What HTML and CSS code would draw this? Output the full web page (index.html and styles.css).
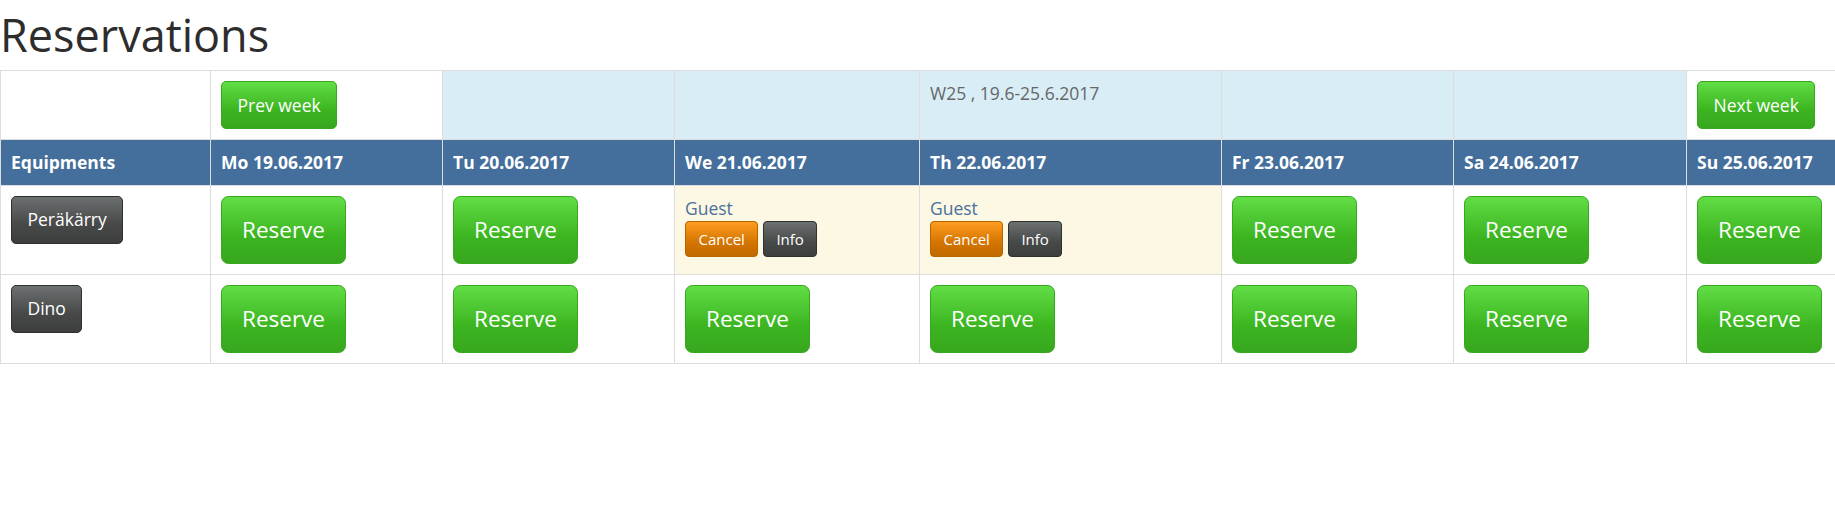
FILE: index.html
```html
<!DOCTYPE html>
<html lang="fi">
<head>
<meta charset="utf-8">
<title>Reservations</title>
<link rel="stylesheet" href="styles.css">
</head>
<body>
<h1 class="page-title">Reservations</h1>
<table class="calendar">
  <colgroup>
    <col class="col-eq">
    <col class="col-mo">
    <col class="col-tu">
    <col class="col-we">
    <col class="col-th">
    <col class="col-fr">
    <col class="col-sa">
    <col class="col-su">
  </colgroup>
  <tbody>
    <tr class="nav-row">
      <td></td>
      <td><button class="btn btn-success">Prev week</button></td>
      <td class="info"></td>
      <td class="info"></td>
      <td class="info"><span class="week-label">W25 , 19.6-25.6.2017</span></td>
      <td class="info"></td>
      <td class="info"></td>
      <td><button class="btn btn-success">Next week</button></td>
    </tr>
    <tr class="head-row">
      <th>Equipments</th>
      <th>Mo 19.06.2017</th>
      <th>Tu 20.06.2017</th>
      <th>We 21.06.2017</th>
      <th>Th 22.06.2017</th>
      <th>Fr 23.06.2017</th>
      <th>Sa 24.06.2017</th>
      <th>Su 25.06.2017</th>
    </tr>
    <tr>
      <td><button class="btn btn-dark">Peräkärry</button></td>
      <td><button class="btn btn-lg btn-success">Reserve</button></td>
      <td><button class="btn btn-lg btn-success">Reserve</button></td>
      <td class="booked">
        <div class="guest">Guest</div>
        <div class="actions">
          <button class="btn btn-sm btn-warning">Cancel</button>
          <button class="btn btn-sm btn-dark">Info</button>
        </div>
      </td>
      <td class="booked">
        <div class="guest">Guest</div>
        <div class="actions">
          <button class="btn btn-sm btn-warning">Cancel</button>
          <button class="btn btn-sm btn-dark">Info</button>
        </div>
      </td>
      <td><button class="btn btn-lg btn-success">Reserve</button></td>
      <td><button class="btn btn-lg btn-success">Reserve</button></td>
      <td><button class="btn btn-lg btn-success">Reserve</button></td>
    </tr>
    <tr>
      <td><button class="btn btn-dark">Dino</button></td>
      <td><button class="btn btn-lg btn-success">Reserve</button></td>
      <td><button class="btn btn-lg btn-success">Reserve</button></td>
      <td><button class="btn btn-lg btn-success">Reserve</button></td>
      <td><button class="btn btn-lg btn-success">Reserve</button></td>
      <td><button class="btn btn-lg btn-success">Reserve</button></td>
      <td><button class="btn btn-lg btn-success">Reserve</button></td>
      <td><button class="btn btn-lg btn-success">Reserve</button></td>
    </tr>
  </tbody>
</table>
</body>
</html>
```
FILE: styles.css
```css
html, body {
  margin: 0;
  padding: 0;
  background: #fff;
  overflow: hidden;
}

body {
  font-family: "Open Sans", "Liberation Sans", sans-serif;
  font-size: 17.5px;
  line-height: 25px;
  color: #666666;
}

.page-title {
  margin: 10px 0 10.5px;
  font-size: 45px;
  line-height: 1.1;
  font-weight: 400;
  color: #2d2d2d;
}

.calendar {
  width: 100%;
  border-collapse: collapse;
  table-layout: fixed;
}

.col-eq { width: 210px; }
.col-mo { width: 232px; }
.col-tu { width: 232px; }
.col-we { width: 245px; }
.col-th { width: 302px; }
.col-fr { width: 232px; }
.col-sa { width: 233px; }

.calendar td,
.calendar th {
  border: 1px solid #dddddd;
  padding: 10px;
  vertical-align: top;
  text-align: left;
}

.calendar td:last-child,
.calendar th:last-child {
  border-right: none;
}

.calendar .info {
  background: #d9edf7;
}

.calendar .booked {
  background: #fcf8e3;
}

.head-row th {
  background: #446e9b;
  color: #ffffff;
  font-weight: 700;
  padding-top: 9.75px;
  padding-bottom: 9.75px;
}

.week-label {
  color: #666666;
}

.guest {
  color: #4a719c;
}

.actions {
  display: flex;
  gap: 4.5px;
}

.btn {
  display: inline-block;
  margin: 0;
  font-family: inherit;
  font-size: 17.5px;
  line-height: 25px;
  font-weight: 400;
  padding: 10.5px 15.5px;
  border: 1px solid transparent;
  border-radius: 5px;
  color: #ffffff;
  white-space: nowrap;
  vertical-align: top;
  cursor: pointer;
}

.btn-lg {
  font-size: 22.5px;
  line-height: 30px;
  padding: 18px 20px;
  border-radius: 7.5px;
}

.btn-sm {
  font-size: 15px;
  line-height: 22.5px;
  padding: 6px 12.5px;
  border-radius: 4px;
}

.btn-success {
  background-image: linear-gradient(#61dd45, #3cb521 60%, #37a71e);
  border-color: #37a71e;
}

.btn-dark {
  background-image: linear-gradient(#6d7070, #474949 60%, #3d3f3f);
  border-color: #2f3131;
}

.btn-warning {
  background-image: linear-gradient(#ff9c21, #d47500 60%, #c06a00);
  border-color: #b86500;
}
```
